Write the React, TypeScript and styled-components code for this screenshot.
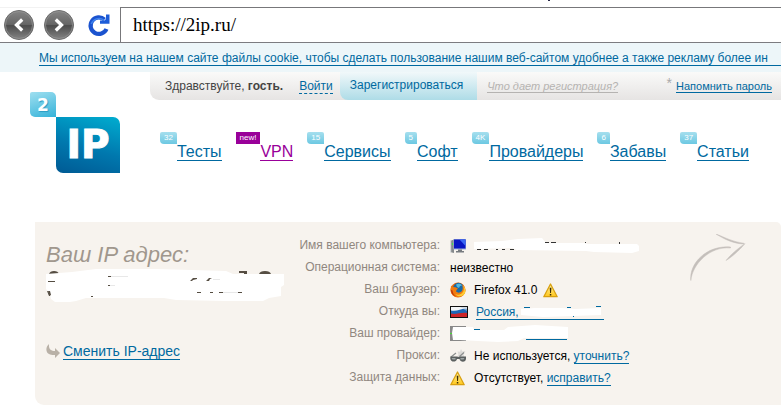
import React from 'react';
import styled, { createGlobalStyle, css } from 'styled-components';

const Global = createGlobalStyle`
  * { box-sizing: border-box; }
  body {
    margin: 0;
    background: #fff;
    font-family: "Liberation Sans", Arial, sans-serif;
    font-size: 12px;
    line-height: 14px;
    color: #000;
    overflow-x: hidden;
  }
`;

const Page = styled.div`
  overflow: hidden;
`;

/* ---------- browser bar ---------- */

const TitleStrip = styled.div`
  display: flex;
  height: 7px;
`;

const TitleMark = styled.i`
  width: 2px;
  height: 1px;
  margin-left: 548px;
  background: #2a2a4a;
`;

const BrowserBar = styled.form`
  display: flex;
  align-items: stretch;
  height: 36px;
  border-bottom: 1px solid #7c7c80;
`;

const BrowserButtons = styled.div`
  display: flex;
  flex: none;
  align-items: center;
  width: 120px;
  padding-left: 3px;
  gap: 8px;
  border-top: 1px solid #f2f2f2;
`;

const IconButton = styled.button`
  display: flex;
  align-items: center;
  justify-content: center;
  width: 32px;
  height: 32px;
  padding: 0;
  border: 0;
  background: none;
`;

const Address = styled.input`
  flex: 1;
  min-width: 0;
  padding: 0 12px;
  border: 1px solid #77777a;
  border-width: 1px 0 0 1px;
  border-radius: 0;
  outline: 0;
  background: #fff;
  color: #000;
  font: 19px "Liberation Serif", "Times New Roman", serif;
`;

/* ---------- links ---------- */

const Link = styled.a<{ $tone?: 'violet' | 'muted'; $dashed?: boolean }>`
  display: inline-block;
  color: #0069a0;
  text-decoration: none;
  white-space: nowrap;
  border-bottom: 1px ${p => (p.$dashed ? 'dashed' : 'solid')} currentColor;
  ${p => p.$tone === 'violet' && css`color: #990099;`}
  ${p => p.$tone === 'muted' && css`color: #b5b3b1; font-style: italic;`}
`;

const CookieBar = styled.div`
  display: flex;
  align-items: flex-start;
  height: 29px;
  padding: 8px 0 0 39px;
  background: #edf6f9;
`;

const CookieLink = styled(Link)`
  flex: 1;
`;

/* ---------- header ---------- */

const Header = styled.header`
  display: grid;
  grid-template-columns: 150px 1fr;
  min-height: 150px;
`;

const Logo = styled.a`
  display: grid;
  grid-template-columns: 26px 64px;
  grid-template-rows: 25px 56px;
  padding: 20px 0 0 30px;
  color: #fff;
  text-decoration: none;
  font-family: "DejaVu Sans", Verdana, sans-serif;
  font-weight: 700;
`;

const LogoTwo = styled.span`
  display: flex;
  align-items: center;
  justify-content: center;
  border-radius: 2px 5px 0 5px;
  background: linear-gradient(160deg, #9fdff0, #35b3d9);
  font-size: 17px;
  line-height: 24px;
  text-shadow: 1px 1px 1px #2b9dc4;
`;

const LogoIp = styled.span`
  grid-area: 2 / 2;
  display: flex;
  align-items: center;
  justify-content: center;
  border-radius: 0 7px 0 7px;
  background: linear-gradient(195deg, #00add0, #0078ae 55%, #005a94);
  font-size: 39px;
  line-height: 56px;
  -webkit-text-stroke: 1px #fff;
`;

const UserBar = styled.div`
  display: flex;
  height: 28px;
  padding: 0 9px 0 15px;
  border-bottom-left-radius: 9px;
  background: linear-gradient(#fafaf9, #e6e4e3);
  color: #444;
  white-space: nowrap;
`;

const UserItem = styled.span<{ $left?: number }>`
  padding-top: 7px;
  margin-left: ${p => p.$left ?? 0}px;
`;

const RegisterTab = styled.a`
  margin: 0 10px 0 7px;
  padding: 6px 14px 0 10px;
  border-bottom-left-radius: 8px;
  background: linear-gradient(#f1f8fa, #aedce7);
  color: #0069a0;
  text-decoration: none;
`;

const SmallItem = styled.span`
  padding-top: 8px;
  font-size: 11px;
  line-height: 12px;
`;

const Remind = styled.span`
  display: flex;
  gap: 4px;
  margin-left: auto;
`;

const Star = styled.span`
  padding-top: 4px;
  color: #aaa;
  font-size: 14px;
`;

const Nav = styled.nav`
  display: flex;
  gap: 14px;
  padding: 32px 0 0 10px;
`;

const NavItem = styled.div`
  display: flex;
  align-items: flex-start;
  font-size: 16px;
  line-height: 16px;
`;

const NavText = styled(Link)`
  margin-top: 12px;
`;

const Badge = styled.span<{ $hot?: boolean }>`
  height: 12px;
  padding: 0 4px;
  border-radius: ${p => (p.$hot ? '0' : '2px 2px 0 4px')};
  background: ${p => (p.$hot ? '#990099' : 'linear-gradient(#a6dfee, #6cc8e2)')};
  color: #fff;
  font-size: 8px;
  line-height: 11px;
`;

/* ---------- information panel ---------- */

const Panel = styled.main`
  display: grid;
  grid-template-columns: 242px 350px 1fr;
  min-height: 183px;
  margin-left: 35px;
  padding: 12px 0 14px 11px;
  border-radius: 0 5px 0 9px;
  background: #f7f3ee;
`;

const AddressBlock = styled.section`
  padding-top: 8px;
`;

const Title = styled.h1`
  margin: 0 0 1px;
  color: #a0978d;
  font-size: 22px;
  line-height: 26px;
  font-style: italic;
  font-weight: 400;
`;

const ChangeRow = styled.div`
  display: flex;
  align-items: flex-start;
  gap: 3px;
  margin-top: 38px;
  font-size: 14px;
  line-height: 16px;
`;

const Block = styled.svg`
  display: block;
  flex: none;
`;

const Details = styled.dl`
  display: grid;
  grid-template-columns: 152px 1fr;
  grid-auto-rows: 22px;
  column-gap: 10px;
  margin: 0;
`;

const Label = styled.dt`
  padding-top: 4px;
  color: #90877f;
  text-align: right;
  white-space: nowrap;
`;

const Value = styled.dd`
  display: flex;
  align-items: center;
  margin: 0;
  padding-top: 2px;
  white-space: nowrap;
`;

const ValueIcon = styled.span`
  display: flex;
  flex: none;
  width: 24px;
`;

const Place = styled.span`
  position: relative;
  width: 128px;
  margin-left: 2px;
  border-bottom: 1px solid #0069a0;
`;

const PlaceLink = styled.a`
  color: #0069a0;
  text-decoration: none;
`;

const PlaceCover = styled.svg`
  position: absolute;
  left: 45px;
  top: 0;
`;

const TrailingIcon = styled.span`
  display: flex;
  margin-left: 6px;
`;

const ArrowCell = styled.div`
  padding: 0 0 0 52px;
`;

/* ---------- drawings ---------- */

const RoundArrow = ({ flip }: { flip?: boolean }) => {
  const id = flip ? 'round-f' : 'round-b';
  return (
    <svg width="32" height="32" viewBox="0 0 32 32">
      <defs>
        <linearGradient id={id} x1="0" y1="0" x2="0" y2="1">
          <stop offset="0" stopColor="#858585" />
          <stop offset=".48" stopColor="#666" />
          <stop offset=".52" stopColor="#4c4c4c" />
          <stop offset="1" stopColor="#858585" />
        </linearGradient>
      </defs>
      <circle cx="16" cy="16" r="14.500" fill={`url(#${id})`} stroke="#6c6c6c" />
      <circle cx="16" cy="16" r="13.500" fill="none" stroke="#959595" strokeWidth=".7" />
      <path d={flip ? 'M12.800 10.500l5.700 5.500-5.700 5.500' : 'M19.200 10.500l-5.700 5.500 5.700 5.500'} fill="none" stroke="#fff" strokeWidth="3.300" />
    </svg>
  );
};

const Reload = () => (
  <svg width="24" height="24" viewBox="0 0 24 24">
    <path d="M17.500 6.500A8.300 8.300 0 1 0 19.500 16" fill="none" stroke="#1b53cf" strokeWidth="4.200" />
    <path d="M17 7.200A8.300 8.300 0 0 0 4.200 11" fill="none" stroke="#3c82ee" strokeWidth="1.400" />
    <path d="M22.500 1.500v9.300H13V7.600h4.400L19 6V1.500z" fill="#1d5cd8" />
  </svg>
);

const Warning = ({ id }: { id: string }) => (
  <svg width="15" height="15" viewBox="0 0 15 15">
    <defs>
      <linearGradient id={id} x1="0" y1="0" x2="0" y2="1">
        <stop offset="0" stopColor="#fff3a0" />
        <stop offset="1" stopColor="#ffc61a" />
      </linearGradient>
    </defs>
    <path d="M7.500 1L14.200 13.700H.8z" fill={`url(#${id})`} stroke="#d9a010" strokeWidth="1.300" strokeLinejoin="round" />
    <path d="M6.700 4.800h1.700L8 10h-.9zM6.800 11h1.500v1.500H6.800z" fill="#3c2c08" />
  </svg>
);

const Computer = () => (
  <svg width="17" height="16" viewBox="0 0 17 16">
    <path d="M0 3l4-1.500V15L0 14z" fill="#85898c" />
    <path d="M0 3l1.200-.4v11.700L0 14z" fill="#d5d8d9" />
    <path d="M2 5h1v2H2z" fill="#35e04c" />
    <path d="M3.500 1H16v10.500H3.500z" fill="#9fb0d8" />
    <path d="M4 1.500h11.500v9H4z" fill="#0715c2" />
    <path d="M9.500 1.500h6v6.500z" fill="#3a68f4" />
    <path d="M8 11.500h4V13h2v1.500H6V13h2z" fill="#777b80" />
  </svg>
);

const Firefox = () => (
  <svg width="16" height="16" viewBox="0 0 16 16">
    <circle cx="8" cy="8" r="7.500" fill="#e8670c" />
    <circle cx="8.500" cy="6.200" r="5.400" fill="#176aa8" />
    <path d="M6 2.500c2-1.500 5-1 6 1l-2 .5-1 2-2-1z" fill="#55b9dc" />
    <path d="M1 3.500L3 5l2.500.2L8 6.500 6.500 8 6 9.500c1.500 1.500 4 1.500 5.500 0 1.500-1.800 1.600-4.300.5-6.800 3 2 4 5.500 2.700 8-1.500 3.500-5 4.800-8 4.300C2.500 14.500-.2 10 .8 6z" fill="#f07b10" />
    <path d="M13 3.500c1.500 2.500 1.300 5.500-.8 7.500-2 2-5 2.300-7 1 3 4 9 2.500 10.200-2 .3-2.500-.4-5-2.400-6.500z" fill="#fdcb32" />
    <path d="M1 8c0 3 2 5.500 5 6.500-2-1.500-3.500-3.500-3.500-6z" fill="#b92e0d" />
  </svg>
);

const Flag = () => (
  <svg width="18" height="12" viewBox="0 0 18 12">
    <path d="M0 0h18v12H0z" fill="#111" />
    <path d="M1 1h16v10H1z" fill="#1c67b7" />
    <path d="M1 1h16v2c-5-1-10 3-16 1.500z" fill="#f4f6f8" />
    <path d="M1 7.500C6 9 11 6 17 7v4H1z" fill="#cc2529" />
    <path d="M10 1h7v4z" fill="#b9cadb" opacity=".6" />
  </svg>
);

const Glasses = () => (
  <svg width="16" height="14" viewBox="0 0 16 14">
    <path d="M11 0l1.300 2.500 3.200-.5-2 3 1 3H7l1.500-2.500-1-3 2.500.3z" fill="#dddbd8" />
    <path d="M1 8l5-4M9.500 7.500L14 3.500" stroke="#8b8e8e" strokeWidth="1.200" />
    <path d="M.3 7.500h6.500l1.700.5 1.500-.5h6v2c0 4-5.500 4.300-6.500.5H7C6 14 .3 13 .3 9.500z" fill="#5b6060" />
    <path d="M1.500 9h4v1.500h-3zM10.500 9h4l-1 1.500h-3z" fill="#a1a7a7" />
  </svg>
);

const HostCover = () => (
  <Block width="166" height="16" viewBox="0 0 166 16">
    <path d="M0 4L28 3 44 1 68 0 72 5 110 5 114 6 163 6 165 8V13L158 15 120 14 112 13 43 12 38 10 0 11z" fill="#fff" />
    <path d="M3 11h4v1H3zM10 11h4v1h-4zM22 11h2v1h-2zM28 11h3v1h-3zM36 11h4v1h-4zM71 4h4v1h-4zM77 4h5v1h-5zM111 4h1v1h-1zM145 4h1v2h-1z" fill="#333" />
  </Block>
);

const ProviderCover = () => (
  <Block width="120" height="18" viewBox="0 0 120 18">
    <path d="M0 1h16v15H0z" fill="#888" />
    <path d="M0 8h2v1H0z" fill="#43dc31" />
    <path d="M76 14h41v1H76z" fill="#0069a0" />
    <path d="M3 2L23 2 24 5 54 5 58 2 85 0 118 2V13H74L68 16 48 17 28 16 10 15 3 15 2 8z" fill="#fff" />
    <path d="M24 4h6v1h-6z" fill="#0069a0" />
  </Block>
);

const IpCover = () => (
  <Block width="240" height="36" viewBox="0 0 240 36">
    <path d="M3 5q1-3 5-3t5 3zM213 5q1-3 6-3t6 3zM193 2h8v4h-3V4h-5z" fill="#554d42" />
    <path d="M1 22h4v5H3z" fill="#554d42" />
    <path d="M0 5L26 3 50 0 110 0 145 1 180 2 187 5 238 5V16L235 18V27L223 29 217 32 180 32 130 31 118 29 40 29 30 32 24 33H9L5 30 4 25 0 20z" fill="#fff" />
    <path d="M2 12h7v1H2zM62 7h3v1h-3zM62 16h2v1h-2zM144 12l3-3h4v1l-4 1-1 1zM160 12l3-3h3l-2 1-1 2zM151 23h4v1h-4zM164 23h3v1h-3zM173 23h4v1h-4zM192 23h4v1h-4zM45 27h2v1h-2zM2 22h2l1 4H3z" fill="#554d42" />
    <path d="M65 7h17v1H65zM64 16h5v1h-5zM167 10h7v1h-7zM177 23h15v1h-15z" fill="#e8e8e8" />
  </Block>
);

const TurnArrow = () => (
  <Block width="14" height="16" viewBox="0 0 14 16">
    <path d="M3 1C-.5 4-.5 9 3 11c2 1.200 4 1 6 1v3l5-5-5-5v3C5 8 2.500 6 3 1z" fill="#b9b1a7" />
  </Block>
);

const Swoosh = () => (
  <Block width="60" height="50" viewBox="0 0 60 50">
    <g fill="#c4bfbb" stroke="#c4bfbb" strokeWidth=".5">
      <path d="M.8 46.500C2.500 30 20 12 40.500 14V13C17 11-1 29 .8 46.500z" />
      <path d="M26 0C34 5 43 9.500 53.500 10L54 9.300C43 8 35 3.500 26 0z" />
      <path d="M55 9.500C48 14.500 41 20 36 26.500 41 23.500 49 17 55 9.500z" />
    </g>
  </Block>
);

/* ---------- content ---------- */

const navItems = [
  { badge: '32', text: 'Тесты' },
  { badge: 'new!', text: 'VPN', hot: true },
  { badge: '15', text: 'Сервисы' },
  { badge: '5', text: 'Софт' },
  { badge: '4K', text: 'Провайдеры' },
  { badge: '6', text: 'Забавы' },
  { badge: '37', text: 'Статьи' },
];

export default function App() {
  return (
    <Page>
      <Global />
      <TitleStrip><TitleMark /></TitleStrip>
      <BrowserBar onSubmit={e => e.preventDefault()}>
        <BrowserButtons>
          <IconButton type="button" aria-label="Назад"><RoundArrow /></IconButton>
          <IconButton type="button" aria-label="Вперёд"><RoundArrow flip /></IconButton>
          <IconButton type="button" aria-label="Обновить"><Reload /></IconButton>
        </BrowserButtons>
        <Address aria-label="Адрес" defaultValue="https://2ip.ru/" />
      </BrowserBar>

      <CookieBar>
        <CookieLink href="#cookie">
          Мы используем на нашем сайте файлы cookie, чтобы сделать пользование нашим веб-сайтом удобнее а также рекламу более ин
        </CookieLink>
      </CookieBar>

      <Header>
        <Logo href="#home">
          <LogoTwo>2</LogoTwo>
          <LogoIp>IP</LogoIp>
        </Logo>
        <div>
          <UserBar>
            <UserItem>Здравствуйте, <b>гость.</b></UserItem>
            <UserItem $left={16}><Link href="#login" $dashed>Войти</Link></UserItem>
            <RegisterTab href="#register">Зарегистрироваться</RegisterTab>
            <SmallItem><Link href="#why" $tone="muted">Что дает регистрация?</Link></SmallItem>
            <Remind>
              <Star>*</Star>
              <SmallItem><Link href="#remind">Напомнить пароль</Link></SmallItem>
            </Remind>
          </UserBar>
          <Nav>
            {navItems.map(item => (
              <NavItem key={item.text}>
                <Badge $hot={item.hot}>{item.badge}</Badge>
                <NavText href="#nav" $tone={item.hot ? 'violet' : undefined}>{item.text}</NavText>
              </NavItem>
            ))}
          </Nav>
        </div>
      </Header>

      <Panel>
        <AddressBlock>
          <Title>Ваш IP адрес:</Title>
          <IpCover />
          <ChangeRow>
            <TurnArrow />
            <Link href="#change">Сменить IP-адрес</Link>
          </ChangeRow>
        </AddressBlock>

        <Details>
          <Label>Имя вашего компьютера:</Label>
          <Value><ValueIcon><Computer /></ValueIcon><HostCover /></Value>
          <Label>Операционная система:</Label>
          <Value>неизвестно</Value>
          <Label>Ваш браузер:</Label>
          <Value>
            <ValueIcon><Firefox /></ValueIcon>Firefox 41.0
            <TrailingIcon><Warning id="warn-browser" /></TrailingIcon>
          </Value>
          <Label>Откуда вы:</Label>
          <Value>
            <ValueIcon><Flag /></ValueIcon>
            <Place>
              <PlaceLink href="#place">Россия,</PlaceLink>
              <PlaceCover width="84" height="14" viewBox="0 0 84 14">
                <path d="M0 4L14 3 40 3 54 4 80 3V10L52 11 22 12 0 10z" fill="#fff" />
                <path d="M3 2h6v1H3zM46 2h4v1h-4zM75 1h5v1h-5zM52 11h1v1h-1z" fill="#0069a0" />
              </PlaceCover>
            </Place>
          </Value>
          <Label>Ваш провайдер:</Label>
          <Value><ProviderCover /></Value>
          <Label>Прокси:</Label>
          <Value>
            <ValueIcon><Glasses /></ValueIcon>
            <span>Не используется, <Link href="#proxy">уточнить?</Link></span>
          </Value>
          <Label>Защита данных:</Label>
          <Value>
            <ValueIcon><Warning id="warn-data" /></ValueIcon>
            <span>Отсутствует, <Link href="#protect">исправить?</Link></span>
          </Value>
        </Details>

        <ArrowCell><Swoosh /></ArrowCell>
      </Panel>
    </Page>
  );
}
